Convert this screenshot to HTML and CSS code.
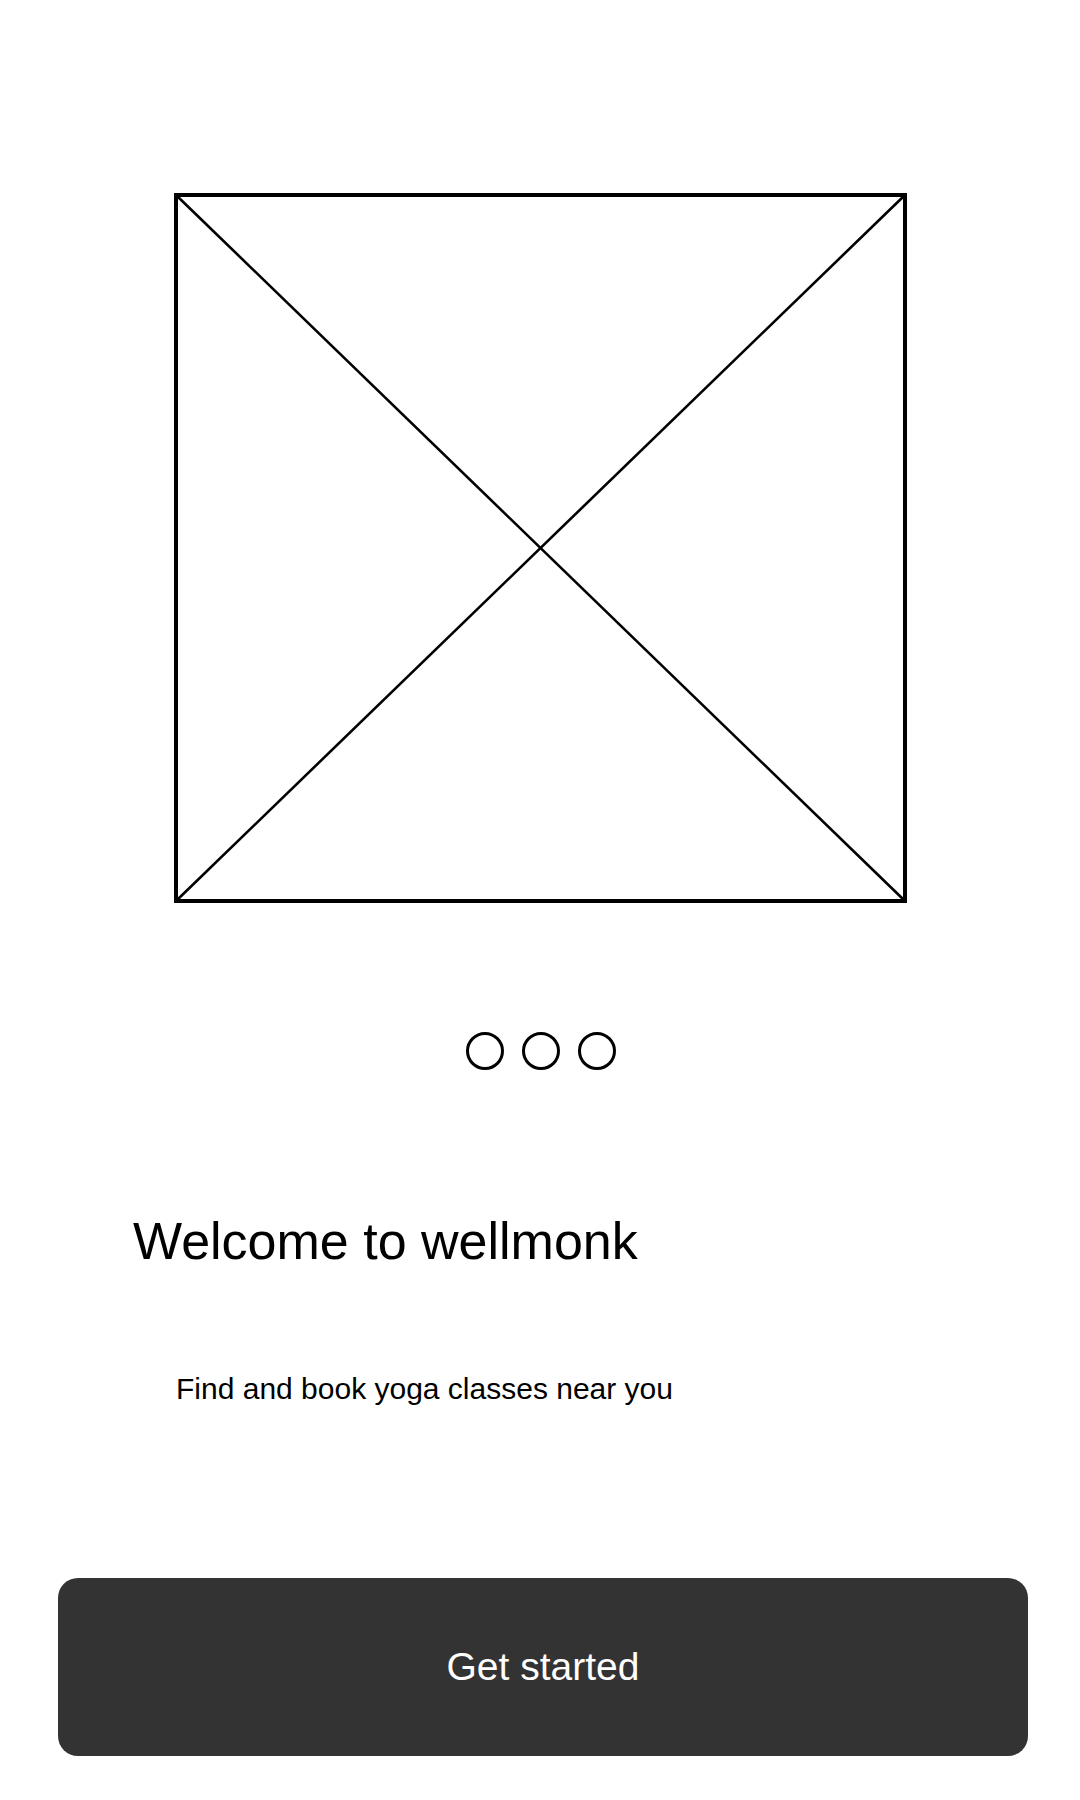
FILE: index.html
```html
<!DOCTYPE html>
<html>

<head>
    <title>wellmonk</title>
    <link rel="stylesheet" href="styles.css">
</head>

<body>
    <div class="screen">
        <div class="hero">
            <svg class="placeholder" viewBox="0 0 733 710" width="733" height="710">
                <rect x="2" y="2" width="729" height="706" fill="none" stroke="#000" stroke-width="4" />
                <line x1="2" y1="2" x2="731" y2="708" stroke="#000" stroke-width="2.6" />
                <line x1="731" y1="2" x2="2" y2="708" stroke="#000" stroke-width="2.6" />
            </svg>
        </div>

        <div class="dot-container">
            <div class="dot"></div>
            <div class="dot"></div>
            <div class="dot"></div>
        </div>

        <h1 class="title">Welcome to wellmonk</h1>
        <p class="subtitle">Find and book yoga classes near you</p>

        <button class="start-button">Get started</button>
    </div>
</body>

</html>
```

FILE: styles.css
```css
body {
    margin: 0;
    padding: 0;
    background-color: #ffffff;
    font-family: "Liberation Sans", Arial, sans-serif;
    color: #000000;
}

.screen {
    width: 1080px;
    height: 1800px;
    display: flex;
    flex-direction: column;
}

.hero {
    display: flex;
    justify-content: center;
    padding-top: 193px;
    padding-left: 1px;
}

.placeholder {
    display: block;
}

.dot-container {
    display: flex;
    justify-content: center;
    gap: 18px;
    margin-top: 129px;
    padding-left: 2px;
}

.dot {
    width: 32px;
    height: 32px;
    border: 3px solid #000000;
    border-radius: 50%;
}

.title {
    margin: 141px 0 0 133px;
    font-size: 52px;
    font-weight: normal;
    line-height: 60px;
}

.subtitle {
    margin: 101px 0 0 176px;
    font-size: 30px;
    line-height: 34px;
}

.start-button {
    margin: 172px 0 0 58px;
    width: 970px;
    height: 178px;
    border: none;
    border-radius: 20px;
    background-color: #333333;
    color: #ffffff;
    font-family: "Liberation Sans", Arial, sans-serif;
    font-size: 39px;
    cursor: pointer;
}
```
